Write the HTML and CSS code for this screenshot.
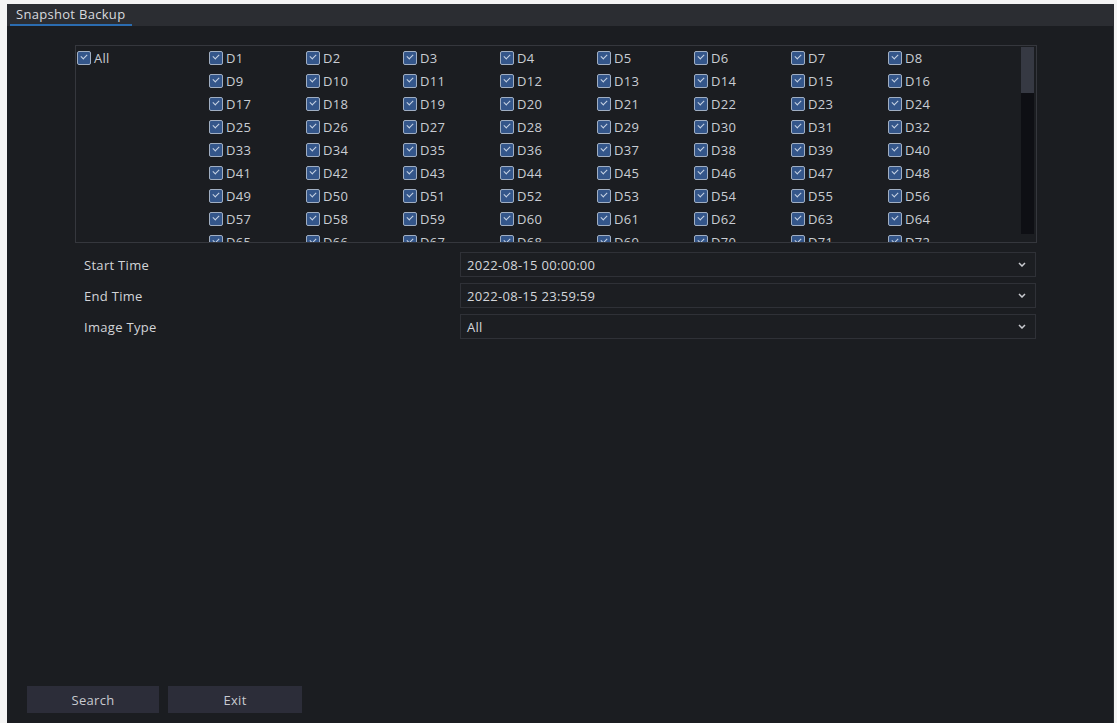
FILE: index.html
```html
<!DOCTYPE html>
<html lang="en">
<head>
<meta charset="utf-8">
<title>Snapshot Backup</title>
<link rel="stylesheet" href="styles.css">
</head>
<body>
<div class="window">
  <div class="tabbar">
    <div class="tab">Snapshot Backup</div>
  </div>
  <div class="channels">
    <div class="channel-grid">
      <label class="item all"><span class="cb"></span>All</label>
      <label class="item"><span class="cb"></span>D1</label>
      <label class="item"><span class="cb"></span>D2</label>
      <label class="item"><span class="cb"></span>D3</label>
      <label class="item"><span class="cb"></span>D4</label>
      <label class="item"><span class="cb"></span>D5</label>
      <label class="item"><span class="cb"></span>D6</label>
      <label class="item"><span class="cb"></span>D7</label>
      <label class="item"><span class="cb"></span>D8</label>
      <label class="item"><span class="cb"></span>D9</label>
      <label class="item"><span class="cb"></span>D10</label>
      <label class="item"><span class="cb"></span>D11</label>
      <label class="item"><span class="cb"></span>D12</label>
      <label class="item"><span class="cb"></span>D13</label>
      <label class="item"><span class="cb"></span>D14</label>
      <label class="item"><span class="cb"></span>D15</label>
      <label class="item"><span class="cb"></span>D16</label>
      <label class="item"><span class="cb"></span>D17</label>
      <label class="item"><span class="cb"></span>D18</label>
      <label class="item"><span class="cb"></span>D19</label>
      <label class="item"><span class="cb"></span>D20</label>
      <label class="item"><span class="cb"></span>D21</label>
      <label class="item"><span class="cb"></span>D22</label>
      <label class="item"><span class="cb"></span>D23</label>
      <label class="item"><span class="cb"></span>D24</label>
      <label class="item"><span class="cb"></span>D25</label>
      <label class="item"><span class="cb"></span>D26</label>
      <label class="item"><span class="cb"></span>D27</label>
      <label class="item"><span class="cb"></span>D28</label>
      <label class="item"><span class="cb"></span>D29</label>
      <label class="item"><span class="cb"></span>D30</label>
      <label class="item"><span class="cb"></span>D31</label>
      <label class="item"><span class="cb"></span>D32</label>
      <label class="item"><span class="cb"></span>D33</label>
      <label class="item"><span class="cb"></span>D34</label>
      <label class="item"><span class="cb"></span>D35</label>
      <label class="item"><span class="cb"></span>D36</label>
      <label class="item"><span class="cb"></span>D37</label>
      <label class="item"><span class="cb"></span>D38</label>
      <label class="item"><span class="cb"></span>D39</label>
      <label class="item"><span class="cb"></span>D40</label>
      <label class="item"><span class="cb"></span>D41</label>
      <label class="item"><span class="cb"></span>D42</label>
      <label class="item"><span class="cb"></span>D43</label>
      <label class="item"><span class="cb"></span>D44</label>
      <label class="item"><span class="cb"></span>D45</label>
      <label class="item"><span class="cb"></span>D46</label>
      <label class="item"><span class="cb"></span>D47</label>
      <label class="item"><span class="cb"></span>D48</label>
      <label class="item"><span class="cb"></span>D49</label>
      <label class="item"><span class="cb"></span>D50</label>
      <label class="item"><span class="cb"></span>D51</label>
      <label class="item"><span class="cb"></span>D52</label>
      <label class="item"><span class="cb"></span>D53</label>
      <label class="item"><span class="cb"></span>D54</label>
      <label class="item"><span class="cb"></span>D55</label>
      <label class="item"><span class="cb"></span>D56</label>
      <label class="item"><span class="cb"></span>D57</label>
      <label class="item"><span class="cb"></span>D58</label>
      <label class="item"><span class="cb"></span>D59</label>
      <label class="item"><span class="cb"></span>D60</label>
      <label class="item"><span class="cb"></span>D61</label>
      <label class="item"><span class="cb"></span>D62</label>
      <label class="item"><span class="cb"></span>D63</label>
      <label class="item"><span class="cb"></span>D64</label>
      <label class="item"><span class="cb"></span>D65</label>
      <label class="item"><span class="cb"></span>D66</label>
      <label class="item"><span class="cb"></span>D67</label>
      <label class="item"><span class="cb"></span>D68</label>
      <label class="item"><span class="cb"></span>D69</label>
      <label class="item"><span class="cb"></span>D70</label>
      <label class="item"><span class="cb"></span>D71</label>
      <label class="item"><span class="cb"></span>D72</label>
    </div>
    <div class="scrollbar"><div class="thumb"></div></div>
  </div>
  <div class="form">
    <div class="row">
      <div class="label">Start Time</div>
      <div class="select"><span>2022-08-15 00:00:00</span>
        <svg class="chev" width="8" height="5" viewBox="0 0 8 5"><path d="M1 1 L4 4 L7 1" fill="none" stroke="#c9cbd0" stroke-width="1.5"/></svg></div>
    </div>
    <div class="row">
      <div class="label">End Time</div>
      <div class="select"><span>2022-08-15 23:59:59</span>
        <svg class="chev" width="8" height="5" viewBox="0 0 8 5"><path d="M1 1 L4 4 L7 1" fill="none" stroke="#c9cbd0" stroke-width="1.5"/></svg></div>
    </div>
    <div class="row">
      <div class="label">Image Type</div>
      <div class="select"><span>All</span>
        <svg class="chev" width="8" height="5" viewBox="0 0 8 5"><path d="M1 1 L4 4 L7 1" fill="none" stroke="#c9cbd0" stroke-width="1.5"/></svg></div>
    </div>
  </div>
  <div class="buttons">
    <button class="btn btn-search">Search</button>
    <button class="btn btn-exit">Exit</button>
  </div>
</div>
</body>
</html>
```
FILE: styles.css
```css
html, body {
  margin: 0;
  padding: 0;
  background: #f4f4f4;
}
body {
  width: 1117px;
  height: 723px;
  overflow: hidden;
  font-family: "Open Sans", "Noto Sans", sans-serif;
  font-size: 13px;
  letter-spacing: 0.3px;
  color: #d2d4d8;
}
.window {
  margin: 4px 3px 0 7px;
  height: 719px;
  background: #1b1d21;
  display: flex;
  flex-direction: column;
  box-sizing: border-box;
  border-right: 1px solid #2a2c31;
}
.tabbar {
  height: 22px;
  background: #2b2d32;
  padding-left: 3px;
  display: flex;
  align-items: stretch;
  flex: none;
}
.tab {
  padding: 0 7px 0 6px;
  line-height: 20px;
  border-bottom: 2px solid #2b6cb0;
  color: #d8dade;
  font-size: 13px;
}
.channels {
  margin: 19px 0 0 68px;
  width: 962px;
  height: 198px;
  box-sizing: border-box;
  border: 1px solid #35373d;
  display: flex;
  overflow: hidden;
  flex: none;
}
.channel-grid {
  flex: 1;
  display: grid;
  grid-template-columns: 132px repeat(8, 97px);
  grid-auto-rows: 23px;
  padding: 0 0 0 1px;
  align-content: start;
  overflow: hidden;
}
.item {
  display: flex;
  align-items: center;
  gap: 3px;
  color: #c9cdd4;
  white-space: nowrap;
}
.all {
  grid-column: 1;
  grid-row: 1 / span 9;
  align-self: start;
  height: 23px;
}
.cb {
  position: relative;
  width: 14px;
  height: 14px;
  box-sizing: border-box;
  border: 1.5px solid #a0aec2;
  border-radius: 2px;
  background: #34568a;
  flex: none;
}
.cb::after {
  content: "";
  position: absolute;
  left: 2.5px;
  top: 2px;
  width: 5px;
  height: 3px;
  border-left: 1.5px solid #c7d3e4;
  border-bottom: 1.5px solid #c7d3e4;
  transform: rotate(-45deg);
}
.scrollbar {
  width: 13px;
  margin: 1px 2px 8px 0;
  background: #0e0f14;
  flex: none;
}
.thumb {
  height: 46px;
  background: #363943;
}
.form {
  margin: 9px 0 0 77px;
  display: flex;
  flex-direction: column;
  gap: 6px;
  flex: none;
}
.row {
  display: flex;
  align-items: center;
  height: 25px;
}
.label {
  width: 376px;
  color: #d2d4d8;
}
.select {
  width: 576px;
  height: 25px;
  box-sizing: border-box;
  border: 1px solid #2f3137;
  background: #1c1e22;
  display: flex;
  align-items: center;
  justify-content: space-between;
  padding: 0 9px 0 6px;
  color: #d4d6da;
}
.chev {
  display: block;
}
.buttons {
  margin: auto 0 10px 20px;
  display: flex;
  gap: 9px;
  flex: none;
}
.btn {
  height: 27px;
  border: none;
  background: #2c2d39;
  color: #c8cad0;
  font-family: inherit;
  font-size: 13px;
  letter-spacing: 0.3px;
  padding: 0;
}
.btn-search {
  width: 132px;
}
.btn-exit {
  width: 134px;
}
```
